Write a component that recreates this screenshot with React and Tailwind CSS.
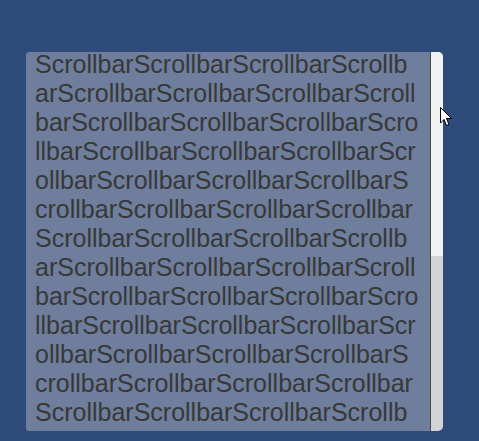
import React from 'react';

const lines = [
  'ScrollbarScrollbarScrollbarScrollb',
  'arScrollbarScrollbarScrollbarScroll',
  'barScrollbarScrollbarScrollbarScro',
  'llbarScrollbarScrollbarScrollbarScr',
  'ollbarScrollbarScrollbarScrollbarS',
  'crollbarScrollbarScrollbarScrollbar',
  'ScrollbarScrollbarScrollbarScrollb',
  'arScrollbarScrollbarScrollbarScroll',
  'barScrollbarScrollbarScrollbarScro',
  'llbarScrollbarScrollbarScrollbarScr',
  'ollbarScrollbarScrollbarScrollbarS',
  'crollbarScrollbarScrollbarScrollbar',
  'ScrollbarScrollbarScrollbarScrollb',
];

const Cursor = () => (
  <svg className="absolute left-[440px] top-[107px]" width="14" height="22" viewBox="0 0 14 22">
    <path d="M0.5 0.5 L0.5 16 L4 12.5 L6.5 18.5 L9 17.5 L6.5 11.5 L11.5 11.5 Z" fill="#fff" stroke="#000" strokeWidth="1" />
  </svg>
);

export default function App() {
  return (
    <div className="relative w-[479px] h-[441px] bg-[#2f4b79] pt-[52px] pl-[26px] overflow-hidden">
      <div className="flex h-[379px]">
        <div className="w-[405px] h-full bg-[#6e7e9c] rounded-l-[3px] pl-[9px] border-r border-[#4a4a4a]">
          {lines.map((l, i) => (
            <div
              key={i}
              className={
                i === 0
                  ? 'whitespace-nowrap text-[25px] leading-[25px] mb-[2px] text-[#383838]'
                  : 'whitespace-nowrap text-[25px] leading-[29px] text-[#383838]'
              }
              style={{ fontFamily: '"Liberation Sans", Arial, sans-serif' }}
            >
              {l}
            </div>
          ))}
        </div>
        <div className="w-[12px] h-full flex flex-col rounded-r-[5px] overflow-hidden bg-[#d4d4d4]">
          <div className="h-[204px] bg-[#f2f2f2] rounded-br-[2px]" />
        </div>
      </div>
      <Cursor />
    </div>
  );
}
